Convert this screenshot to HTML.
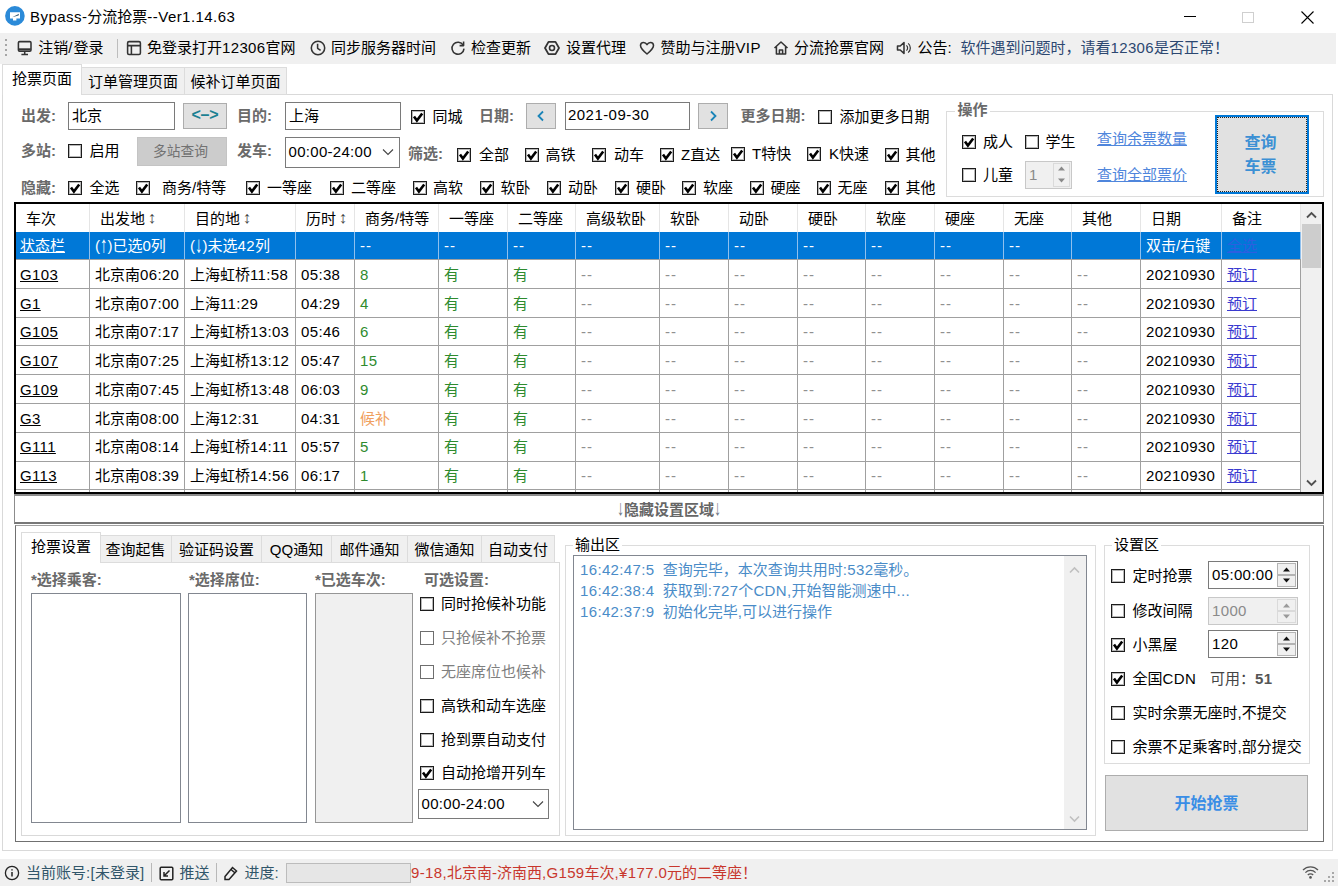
<!DOCTYPE html><html lang="zh"><head><meta charset="utf-8"><title>Bypass-分流抢票--Ver1.14.63</title><style>
html,body{margin:0;padding:0;}
body{width:1338px;height:886px;position:relative;overflow:hidden;background:#fff;font-family:"Liberation Sans","Noto Sans CJK SC",sans-serif;font-size:15px;color:#000;}
.a{position:absolute;white-space:nowrap;line-height:20px;height:20px;}
.g{color:#6a6a6a;font-weight:bold;}
.box{position:absolute;box-sizing:border-box;}
.cb{position:absolute;box-sizing:border-box;width:14px;height:14px;border:1px solid #1c1c1c;background:#fff;box-shadow:inset 0 0 0 1px rgba(0,0,0,.28);}
.cb.d{border-color:#6e6e6e;box-shadow:none;}
.cb svg{position:absolute;left:0;top:0;}
.inp{position:absolute;box-sizing:border-box;border:1px solid #7a7a7a;background:#fff;}
.btn{position:absolute;box-sizing:border-box;border:1px solid #adadad;background:#e1e1e1;}
.tab{position:absolute;box-sizing:border-box;border:1px solid #dcdcdc;background:#f0f0f0;text-align:center;white-space:nowrap;}
.tab.s{background:#fff;border-bottom:none;}
.lnk{color:#4f86dc;text-decoration:underline;}
.th{position:absolute;top:0;height:28px;line-height:28px;white-space:nowrap;}
.td{position:absolute;white-space:nowrap;height:28px;line-height:28px;}
.vl{position:absolute;width:1px;}
.hl{position:absolute;height:1px;}
.grn{color:#2a8a2a;}
.dd{color:#8a8a8a;}
.dis{color:#808080;}
.l{letter-spacing:0.35px;}
</style></head><body>
<svg class="box" style="left:4px;top:5px" width="22" height="22" viewBox="0 0 22 22"><circle cx="10.9" cy="10.9" r="9.8" fill="#2b8ad8"/><path d="M6 7.3 H16 V13.4 H6 Z M9 13.4 H12.4 V15.6 H9 Z" fill="#fff"/><path d="M8.2 12.2 L15 8.8 L14.6 10.6 Z" fill="#3a5f7a"/></svg>
<div class="a " style="left:30px;top:6.5px;font-size:15px;"><span style="letter-spacing:0.45px">Bypass-</span>分流抢票<span style="letter-spacing:0.45px">--Ver1.14.63</span></div>
<div class="hl" style="left:1184px;top:16px;width:12px;background:#000"></div>
<div class="box" style="left:1242px;top:12px;width:12px;height:11px;border:1px solid #cfcfcf"></div>
<svg class="box" style="left:1300px;top:10px" width="15" height="15" viewBox="0 0 15 15"><path d="M1.5 1.5 L13.5 13.5 M13.5 1.5 L1.5 13.5" stroke="#000" stroke-width="1.1" fill="none"/></svg>
<div class="box" style="left:0;top:33px;width:1336px;height:31px;background:#f0f0f0"></div>
<div class="box" style="left:5px;top:39px;width:2px;height:2px;background:#a6a6a6"></div>
<div class="box" style="left:5px;top:44px;width:2px;height:2px;background:#a6a6a6"></div>
<div class="box" style="left:5px;top:49px;width:2px;height:2px;background:#a6a6a6"></div>
<div class="box" style="left:5px;top:54px;width:2px;height:2px;background:#a6a6a6"></div>
<svg class="box" style="left:17px;top:39.5px" width="16" height="16" viewBox="0 0 16 16" fill="none" stroke="#333" stroke-width="1.55" stroke-linejoin="round"><rect x="1.4" y="1.6" width="12.6" height="9.6" rx="1.2"/><path d="M1.6 9.4 H13.8" stroke-width="2.2"/><path d="M4.4 14.4 H11 M7.7 11.4 V14"/></svg>
<div class="a " style="left:38.3px;top:37.5px;">注销<span style="letter-spacing:1px">/</span>登录</div>
<div class="vl" style="left:117px;top:39px;height:19px;background:#bdbdbd"></div>
<svg class="box" style="left:125.5px;top:39.5px" width="16" height="16" viewBox="0 0 16 16" fill="none" stroke="#333" stroke-width="1.55" stroke-linejoin="round"><rect x="1.6" y="1.6" width="12.8" height="12.8" rx="1.4"/><path d="M1.6 5.6 H14.4 M5.4 5.6 V14.4"/></svg>
<div class="a " style="left:147px;top:37.5px;">免登录打开<span class="l">12306</span>官网</div>
<svg class="box" style="left:309.5px;top:39.5px" width="16" height="16" viewBox="0 0 16 16" fill="none" stroke="#333" stroke-width="1.55" stroke-linejoin="round"><circle cx="8" cy="8" r="6.7"/><path d="M7.6 3.8 V8.3 L10.6 10.4"/></svg>
<div class="a " style="left:331px;top:37.5px;">同步服务器时间</div>
<svg class="box" style="left:449.5px;top:39.5px" width="16" height="16" viewBox="0 0 16 16" fill="none" stroke="#333" stroke-width="1.55" stroke-linejoin="round"><path d="M13.2 5.2 A6 6 0 1 0 14 8.6"/><path d="M13.6 1.6 V5.6 H9.6" /></svg>
<div class="a " style="left:471px;top:37.5px;">检查更新</div>
<svg class="box" style="left:544px;top:39.5px" width="16" height="16" viewBox="0 0 16 16" fill="none" stroke="#333" stroke-width="1.55" stroke-linejoin="round"><path d="M15.0 8.0 L11.5 14.1 L4.5 14.1 L1.0 8.0 L4.5 1.9 L11.5 1.9 Z" stroke-width="1.8"/><circle cx="8" cy="8" r="2.5" stroke-width="1.6"/></svg>
<div class="a " style="left:566px;top:37.5px;">设置代理</div>
<svg class="box" style="left:639px;top:39.5px" width="16" height="16" viewBox="0 0 16 16" fill="none" stroke="#333" stroke-width="1.55" stroke-linejoin="round"><path d="M8 14 C3 10 1.5 8 1.5 5.6 C1.5 3.6 3 2.4 4.6 2.4 C6 2.4 7.2 3.2 8 4.6 C8.8 3.2 10 2.4 11.4 2.4 C13 2.4 14.5 3.6 14.5 5.6 C14.5 8 13 10 8 14 Z"/></svg>
<div class="a " style="left:660.5px;top:37.5px;">赞助与注册<span class="l">VIP</span></div>
<svg class="box" style="left:772.5px;top:39.5px" width="16" height="16" viewBox="0 0 16 16" fill="none" stroke="#333" stroke-width="1.55" stroke-linejoin="round"><path d="M1.5 8 L8 2 L14.5 8 M3.4 6.6 V14 H12.6 V6.6 M6.4 14 V10 H9.6 V14"/></svg>
<div class="a " style="left:794px;top:37.5px;">分流抢票官网</div>
<svg class="box" style="left:896px;top:39.5px" width="16" height="16" viewBox="0 0 16 16" fill="none" stroke="#333" stroke-width="1.55" stroke-linejoin="round"><path d="M1.5 6 H4.2 L8 2.6 V13.4 L4.2 10 H1.5 Z"/><path d="M10.4 5.4 A3.4 3.4 0 0 1 10.4 10.6 M12.2 3.4 A6 6 0 0 1 12.2 12.6" stroke-width="1.2"/></svg>
<div class="a " style="left:917.5px;top:37.5px;">公告:</div>
<div class="a " style="left:960.5px;top:37.5px;color:#2c4770;">软件遇到问题时，请看<span class="l">12306</span>是否正常！</div>
<div class="box" style="left:2px;top:94px;width:1331px;height:757px;border:1px solid #d9d9d9"></div>
<div class="tab" style="left:81px;top:67px;width:104px;height:28px;line-height:28px">订单管理页面</div>
<div class="tab" style="left:184px;top:67px;width:103px;height:28px;line-height:28px">候补订单页面</div>
<div class="tab s" style="left:2px;top:64px;width:80px;height:31px;line-height:28px">抢票页面</div>
<div class="a g" style="left:21px;top:106px;">出发:</div>
<div class="inp" style="left:68px;top:102px;width:107px;height:28px"></div>
<div class="a " style="left:72px;top:106px;">北京</div>
<div class="btn" style="left:183px;top:103px;width:44px;height:26px"></div>
<div class="a " style="left:191.5px;top:105px;color:#1b8092;font-size:16px;font-weight:bold;letter-spacing:-0.3px">&lt;–&gt;</div>
<div class="a g" style="left:237px;top:106px;">目的:</div>
<div class="inp" style="left:285px;top:102px;width:116px;height:28px"></div>
<div class="a " style="left:289px;top:106px;">上海</div>
<div class="cb" style="left:410.5px;top:109.5px"><svg width="12" height="12" viewBox="0 0 12 12"><path d="M2 5.4 L4.9 9.6 L10.2 2.4" fill="none" stroke="#000" stroke-width="2.6"/></svg></div>
<div class="a " style="left:432.5px;top:106.5px;">同城</div>
<div class="a g" style="left:479px;top:106px;">日期:</div>
<div class="btn" style="left:526px;top:103px;width:30px;height:26px"></div>
<svg class="box" style="left:536px;top:110px" width="10" height="12" viewBox="0 0 10 12"><path d="M7 1.5 L2.5 6 L7 10.5" fill="none" stroke="#1a84b8" stroke-width="1.8"/></svg>
<div class="inp" style="left:564.5px;top:102px;width:125px;height:28px"></div>
<div class="a " style="left:568px;top:105px;letter-spacing:0.45px">2021-09-30</div>
<div class="btn" style="left:698px;top:103px;width:30px;height:26px"></div>
<svg class="box" style="left:708px;top:110px" width="10" height="12" viewBox="0 0 10 12"><path d="M3 1.5 L7.5 6 L3 10.5" fill="none" stroke="#1a84b8" stroke-width="1.8"/></svg>
<div class="a g" style="left:740.5px;top:106px;">更多日期:</div>
<div class="cb" style="left:817.5px;top:109.5px"></div>
<div class="a " style="left:839.5px;top:106.5px;">添加更多日期</div>
<div class="a g" style="left:21px;top:141px;">多站:</div>
<div class="cb" style="left:68px;top:144px"></div>
<div class="a " style="left:89.5px;top:141px;">启用</div>
<div class="box" style="left:137px;top:137px;width:90px;height:29px;background:#cccccc;border:1px solid #c4c4c4"></div>
<div class="a " style="left:153px;top:141.5px;color:#727272;font-size:13.75px">多站查询</div>
<div class="a g" style="left:237px;top:141px;">发车:</div>
<div class="inp" style="left:285px;top:137px;width:115px;height:30.5px"></div>
<div class="a " style="left:288.5px;top:141.5px;letter-spacing:0.3px">00:00-24:00</div>
<svg class="box" style="left:382px;top:148px" width="12" height="8" viewBox="0 0 12 8"><path d="M1 1.5 L6 6.5 L11 1.5" fill="none" stroke="#444" stroke-width="1.1"/></svg>
<div class="a g" style="left:408px;top:144px;">筛选:</div>
<div class="cb" style="left:457px;top:148px"><svg width="12" height="12" viewBox="0 0 12 12"><path d="M2 5.4 L4.9 9.6 L10.2 2.4" fill="none" stroke="#000" stroke-width="2.6"/></svg></div>
<div class="a " style="left:479px;top:145px;">全部</div>
<div class="cb" style="left:524.5px;top:148px"><svg width="12" height="12" viewBox="0 0 12 12"><path d="M2 5.4 L4.9 9.6 L10.2 2.4" fill="none" stroke="#000" stroke-width="2.6"/></svg></div>
<div class="a " style="left:545.5px;top:145px;">高铁</div>
<div class="cb" style="left:592px;top:148px"><svg width="12" height="12" viewBox="0 0 12 12"><path d="M2 5.4 L4.9 9.6 L10.2 2.4" fill="none" stroke="#000" stroke-width="2.6"/></svg></div>
<div class="a " style="left:614px;top:145px;">动车</div>
<div class="cb" style="left:659.5px;top:148px"><svg width="12" height="12" viewBox="0 0 12 12"><path d="M2 5.4 L4.9 9.6 L10.2 2.4" fill="none" stroke="#000" stroke-width="2.6"/></svg></div>
<div class="a " style="left:681px;top:145px;">Z直达</div>
<div class="cb" style="left:731px;top:147px"><svg width="12" height="12" viewBox="0 0 12 12"><path d="M2 5.4 L4.9 9.6 L10.2 2.4" fill="none" stroke="#000" stroke-width="2.6"/></svg></div>
<div class="a " style="left:752px;top:144px;">T特快</div>
<div class="cb" style="left:807px;top:147px"><svg width="12" height="12" viewBox="0 0 12 12"><path d="M2 5.4 L4.9 9.6 L10.2 2.4" fill="none" stroke="#000" stroke-width="2.6"/></svg></div>
<div class="a " style="left:829px;top:144px;">K快速</div>
<div class="cb" style="left:884.5px;top:147.5px"><svg width="12" height="12" viewBox="0 0 12 12"><path d="M2 5.4 L4.9 9.6 L10.2 2.4" fill="none" stroke="#000" stroke-width="2.6"/></svg></div>
<div class="a " style="left:905.5px;top:144.5px;">其他</div>
<div class="a g" style="left:21px;top:177.5px;">隐藏:</div>
<div class="cb" style="left:68px;top:180.5px"><svg width="12" height="12" viewBox="0 0 12 12"><path d="M2 5.4 L4.9 9.6 L10.2 2.4" fill="none" stroke="#000" stroke-width="2.6"/></svg></div>
<div class="a " style="left:89.5px;top:177.5px;">全选</div>
<div class="cb" style="left:136px;top:180.5px"><svg width="12" height="12" viewBox="0 0 12 12"><path d="M2 5.4 L4.9 9.6 L10.2 2.4" fill="none" stroke="#000" stroke-width="2.6"/></svg></div>
<div class="a " style="left:162px;top:177.5px;">商务/特等</div>
<div class="cb" style="left:245.5px;top:180.5px"><svg width="12" height="12" viewBox="0 0 12 12"><path d="M2 5.4 L4.9 9.6 L10.2 2.4" fill="none" stroke="#000" stroke-width="2.6"/></svg></div>
<div class="a " style="left:267px;top:177.5px;">一等座</div>
<div class="cb" style="left:329.5px;top:180.5px"><svg width="12" height="12" viewBox="0 0 12 12"><path d="M2 5.4 L4.9 9.6 L10.2 2.4" fill="none" stroke="#000" stroke-width="2.6"/></svg></div>
<div class="a " style="left:351px;top:177.5px;">二等座</div>
<div class="cb" style="left:412.5px;top:180.5px"><svg width="12" height="12" viewBox="0 0 12 12"><path d="M2 5.4 L4.9 9.6 L10.2 2.4" fill="none" stroke="#000" stroke-width="2.6"/></svg></div>
<div class="a " style="left:433px;top:177.5px;">高软</div>
<div class="cb" style="left:479.5px;top:180.5px"><svg width="12" height="12" viewBox="0 0 12 12"><path d="M2 5.4 L4.9 9.6 L10.2 2.4" fill="none" stroke="#000" stroke-width="2.6"/></svg></div>
<div class="a " style="left:500.5px;top:177.5px;">软卧</div>
<div class="cb" style="left:547px;top:180.5px"><svg width="12" height="12" viewBox="0 0 12 12"><path d="M2 5.4 L4.9 9.6 L10.2 2.4" fill="none" stroke="#000" stroke-width="2.6"/></svg></div>
<div class="a " style="left:568px;top:177.5px;">动卧</div>
<div class="cb" style="left:614.5px;top:180.5px"><svg width="12" height="12" viewBox="0 0 12 12"><path d="M2 5.4 L4.9 9.6 L10.2 2.4" fill="none" stroke="#000" stroke-width="2.6"/></svg></div>
<div class="a " style="left:636px;top:177.5px;">硬卧</div>
<div class="cb" style="left:682px;top:180.5px"><svg width="12" height="12" viewBox="0 0 12 12"><path d="M2 5.4 L4.9 9.6 L10.2 2.4" fill="none" stroke="#000" stroke-width="2.6"/></svg></div>
<div class="a " style="left:703px;top:177.5px;">软座</div>
<div class="cb" style="left:749.5px;top:180.5px"><svg width="12" height="12" viewBox="0 0 12 12"><path d="M2 5.4 L4.9 9.6 L10.2 2.4" fill="none" stroke="#000" stroke-width="2.6"/></svg></div>
<div class="a " style="left:770.5px;top:177.5px;">硬座</div>
<div class="cb" style="left:817px;top:180.5px"><svg width="12" height="12" viewBox="0 0 12 12"><path d="M2 5.4 L4.9 9.6 L10.2 2.4" fill="none" stroke="#000" stroke-width="2.6"/></svg></div>
<div class="a " style="left:837.5px;top:177.5px;">无座</div>
<div class="cb" style="left:884.5px;top:180.5px"><svg width="12" height="12" viewBox="0 0 12 12"><path d="M2 5.4 L4.9 9.6 L10.2 2.4" fill="none" stroke="#000" stroke-width="2.6"/></svg></div>
<div class="a " style="left:905.5px;top:177.5px;">其他</div>
<div class="box" style="left:946px;top:111px;width:378px;height:86px;border:1px solid #dcdcdc"></div>
<div class="a g" style="left:955px;top:100px;background:#fff;padding:0 2.5px">操作</div>
<div class="cb" style="left:962px;top:134.5px"><svg width="12" height="12" viewBox="0 0 12 12"><path d="M2 5.4 L4.9 9.6 L10.2 2.4" fill="none" stroke="#000" stroke-width="2.6"/></svg></div>
<div class="a " style="left:983px;top:131.5px;">成人</div>
<div class="cb" style="left:1024.5px;top:134.5px"></div>
<div class="a " style="left:1045.5px;top:131.5px;">学生</div>
<div class="cb" style="left:962px;top:167.5px"></div>
<div class="a " style="left:983px;top:164.5px;">儿童</div>
<div class="box" style="left:1024.5px;top:160.5px;width:47px;height:28px;background:#f0f0f0;border:1px solid #c8c8c8"></div>
<div class="a " style="left:1029px;top:164.5px;color:#8a8a8a">1</div>
<div class="box" style="left:1053px;top:162.5px;width:17px;height:24px;background:#f0f0f0;border:1px solid #dadada"></div>
<svg class="box" style="left:1057px;top:165px" width="9" height="19" viewBox="0 0 9 19"><path d="M1 5.5 L4.5 1.5 L8 5.5 Z M1 13.5 L4.5 17.5 L8 13.5 Z" fill="#8a8a8a"/></svg>
<div class="a lnk" style="left:1097px;top:128.5px;">查询余票数量</div>
<div class="a lnk" style="left:1097px;top:165px;">查询全部票价</div>
<div class="box" style="left:1215px;top:115px;width:94px;height:79px;background:#e1e1e1;border:2px solid #0078d7"></div>
<div class="box" style="left:1217px;top:117px;width:90px;height:75px;border:1px dotted #222"></div>
<div class="a " style="left:1244.5px;top:133px;color:#3c90d4;font-weight:bold;font-size:16px">查询</div>
<div class="a " style="left:1244.5px;top:157px;color:#3c90d4;font-weight:bold;font-size:16px">车票</div>
<div class="box" style="left:14px;top:202px;width:1310px;height:292px;border:2px solid #000;background:#fff;overflow:hidden" id="tbl">
<div class="box" style="left:0;top:28px;width:1285px;height:28px;background:#0078d7"></div>
<div class="vl" style="left:73px;top:0;height:28px;background:#e5e5e5"></div>
<div class="vl" style="left:73px;top:28px;height:262px;background:#a0a0a0"></div>
<div class="vl" style="left:73px;top:28px;height:27px;background:#8fc0ee"></div>
<div class="vl" style="left:168px;top:0;height:28px;background:#e5e5e5"></div>
<div class="vl" style="left:168px;top:28px;height:262px;background:#a0a0a0"></div>
<div class="vl" style="left:168px;top:28px;height:27px;background:#8fc0ee"></div>
<div class="vl" style="left:279px;top:0;height:28px;background:#e5e5e5"></div>
<div class="vl" style="left:279px;top:28px;height:262px;background:#a0a0a0"></div>
<div class="vl" style="left:279px;top:28px;height:27px;background:#8fc0ee"></div>
<div class="vl" style="left:338px;top:0;height:28px;background:#e5e5e5"></div>
<div class="vl" style="left:338px;top:28px;height:262px;background:#a0a0a0"></div>
<div class="vl" style="left:338px;top:28px;height:27px;background:#8fc0ee"></div>
<div class="vl" style="left:422px;top:0;height:28px;background:#e5e5e5"></div>
<div class="vl" style="left:422px;top:28px;height:262px;background:#a0a0a0"></div>
<div class="vl" style="left:422px;top:28px;height:27px;background:#8fc0ee"></div>
<div class="vl" style="left:491px;top:0;height:28px;background:#e5e5e5"></div>
<div class="vl" style="left:491px;top:28px;height:262px;background:#a0a0a0"></div>
<div class="vl" style="left:491px;top:28px;height:27px;background:#8fc0ee"></div>
<div class="vl" style="left:559px;top:0;height:28px;background:#e5e5e5"></div>
<div class="vl" style="left:559px;top:28px;height:262px;background:#a0a0a0"></div>
<div class="vl" style="left:559px;top:28px;height:27px;background:#8fc0ee"></div>
<div class="vl" style="left:643px;top:0;height:28px;background:#e5e5e5"></div>
<div class="vl" style="left:643px;top:28px;height:262px;background:#a0a0a0"></div>
<div class="vl" style="left:643px;top:28px;height:27px;background:#8fc0ee"></div>
<div class="vl" style="left:712px;top:0;height:28px;background:#e5e5e5"></div>
<div class="vl" style="left:712px;top:28px;height:262px;background:#a0a0a0"></div>
<div class="vl" style="left:712px;top:28px;height:27px;background:#8fc0ee"></div>
<div class="vl" style="left:781px;top:0;height:28px;background:#e5e5e5"></div>
<div class="vl" style="left:781px;top:28px;height:262px;background:#a0a0a0"></div>
<div class="vl" style="left:781px;top:28px;height:27px;background:#8fc0ee"></div>
<div class="vl" style="left:849px;top:0;height:28px;background:#e5e5e5"></div>
<div class="vl" style="left:849px;top:28px;height:262px;background:#a0a0a0"></div>
<div class="vl" style="left:849px;top:28px;height:27px;background:#8fc0ee"></div>
<div class="vl" style="left:918px;top:0;height:28px;background:#e5e5e5"></div>
<div class="vl" style="left:918px;top:28px;height:262px;background:#a0a0a0"></div>
<div class="vl" style="left:918px;top:28px;height:27px;background:#8fc0ee"></div>
<div class="vl" style="left:987px;top:0;height:28px;background:#e5e5e5"></div>
<div class="vl" style="left:987px;top:28px;height:262px;background:#a0a0a0"></div>
<div class="vl" style="left:987px;top:28px;height:27px;background:#8fc0ee"></div>
<div class="vl" style="left:1055px;top:0;height:28px;background:#e5e5e5"></div>
<div class="vl" style="left:1055px;top:28px;height:262px;background:#a0a0a0"></div>
<div class="vl" style="left:1055px;top:28px;height:27px;background:#8fc0ee"></div>
<div class="vl" style="left:1124px;top:0;height:28px;background:#e5e5e5"></div>
<div class="vl" style="left:1124px;top:28px;height:262px;background:#a0a0a0"></div>
<div class="vl" style="left:1124px;top:28px;height:27px;background:#8fc0ee"></div>
<div class="vl" style="left:1205px;top:0;height:28px;background:#e5e5e5"></div>
<div class="vl" style="left:1205px;top:28px;height:262px;background:#a0a0a0"></div>
<div class="vl" style="left:1205px;top:28px;height:27px;background:#8fc0ee"></div>
<div class="vl" style="left:1284px;top:0;height:28px;background:#e5e5e5"></div>
<div class="vl" style="left:1284px;top:28px;height:262px;background:#a0a0a0"></div>
<div class="vl" style="left:1284px;top:28px;height:27px;background:#8fc0ee"></div>
<div class="hl" style="left:0;top:55px;width:1285px;background:#a0a0a0"></div>
<div class="hl" style="left:0;top:84px;width:1285px;background:#a0a0a0"></div>
<div class="hl" style="left:0;top:113px;width:1285px;background:#a0a0a0"></div>
<div class="hl" style="left:0;top:141px;width:1285px;background:#a0a0a0"></div>
<div class="hl" style="left:0;top:170px;width:1285px;background:#a0a0a0"></div>
<div class="hl" style="left:0;top:199px;width:1285px;background:#a0a0a0"></div>
<div class="hl" style="left:0;top:228px;width:1285px;background:#a0a0a0"></div>
<div class="hl" style="left:0;top:257px;width:1285px;background:#a0a0a0"></div>
<div class="hl" style="left:0;top:285px;width:1285px;background:#a0a0a0"></div>
<div class="hl" style="left:0;top:314px;width:1285px;background:#a0a0a0"></div>
<div class="th" style="left:10px;top:0.5px">车次</div>
<div class="th" style="left:84px;top:0.5px">出发地<span style="font-size:15px;color:#444;margin-left:3px;display:inline-block;transform:translateY(-1.8px) scale(1.15,1.1);font-weight:bold">↕</span></div>
<div class="th" style="left:179px;top:0.5px">目的地<span style="font-size:15px;color:#444;margin-left:3px;display:inline-block;transform:translateY(-1.8px) scale(1.15,1.1);font-weight:bold">↕</span></div>
<div class="th" style="left:290px;top:0.5px">历时<span style="font-size:15px;color:#444;margin-left:3px;display:inline-block;transform:translateY(-1.8px) scale(1.15,1.1);font-weight:bold">↕</span></div>
<div class="th" style="left:349px;top:0.5px">商务/特等</div>
<div class="th" style="left:433px;top:0.5px">一等座</div>
<div class="th" style="left:502px;top:0.5px">二等座</div>
<div class="th" style="left:570px;top:0.5px">高级软卧</div>
<div class="th" style="left:654px;top:0.5px">软卧</div>
<div class="th" style="left:723px;top:0.5px">动卧</div>
<div class="th" style="left:792px;top:0.5px">硬卧</div>
<div class="th" style="left:860px;top:0.5px">软座</div>
<div class="th" style="left:929px;top:0.5px">硬座</div>
<div class="th" style="left:998px;top:0.5px">无座</div>
<div class="th" style="left:1066px;top:0.5px">其他</div>
<div class="th" style="left:1135px;top:0.5px">日期</div>
<div class="th" style="left:1216px;top:0.5px">备注</div>
<div class="td" style="left:4px;top:28px;color:#fff;text-decoration:underline;">状态栏</div>
<div class="td" style="left:79px;top:28px;color:#fff;">(<span style="display:inline-block;transform:translateY(-1.2px) scaleY(1.5)">↑</span>)已选0列</div>
<div class="td" style="left:174px;top:28px;color:#fff;">(<span style="display:inline-block;transform:translateY(-1.2px) scaleY(1.5)">↓</span>)未选<span class="l">42</span>列</div>
<div class="td" style="left:344px;top:28px;color:#fff;letter-spacing:1px;">--</div>
<div class="td" style="left:428px;top:28px;color:#fff;letter-spacing:1px;">--</div>
<div class="td" style="left:497px;top:28px;color:#fff;letter-spacing:1px;">--</div>
<div class="td" style="left:565px;top:28px;color:#fff;letter-spacing:1px;">--</div>
<div class="td" style="left:649px;top:28px;color:#fff;letter-spacing:1px;">--</div>
<div class="td" style="left:718px;top:28px;color:#fff;letter-spacing:1px;">--</div>
<div class="td" style="left:787px;top:28px;color:#fff;letter-spacing:1px;">--</div>
<div class="td" style="left:855px;top:28px;color:#fff;letter-spacing:1px;">--</div>
<div class="td" style="left:924px;top:28px;color:#fff;letter-spacing:1px;">--</div>
<div class="td" style="left:993px;top:28px;color:#fff;letter-spacing:1px;">--</div>
<div class="td" style="left:1130px;top:28px;color:#fff;">双击/右键</div>
<div class="td" style="left:1211px;top:28px;color:#2c5fe0;text-decoration:underline;">全选</div>
<div class="td" style="left:4px;top:56.75px;text-decoration:underline;"><span class="l">G103</span></div>
<div class="td" style="left:79px;top:56.75px;">北京南<span class="l">06:20</span></div>
<div class="td" style="left:174px;top:56.75px;">上海虹桥<span class="l">11:58</span></div>
<div class="td" style="left:285px;top:56.75px;"><span class="l">05:38</span></div>
<div class="td" style="left:344px;top:56.75px;color:#2e8b2e;">8</div>
<div class="td" style="left:428px;top:56.75px;color:#2e8b2e;">有</div>
<div class="td" style="left:497px;top:56.75px;color:#2e8b2e;">有</div>
<div class="td" style="left:565px;top:56.75px;color:#909090;letter-spacing:1px;">--</div>
<div class="td" style="left:649px;top:56.75px;color:#909090;letter-spacing:1px;">--</div>
<div class="td" style="left:718px;top:56.75px;color:#909090;letter-spacing:1px;">--</div>
<div class="td" style="left:787px;top:56.75px;color:#909090;letter-spacing:1px;">--</div>
<div class="td" style="left:855px;top:56.75px;color:#909090;letter-spacing:1px;">--</div>
<div class="td" style="left:924px;top:56.75px;color:#909090;letter-spacing:1px;">--</div>
<div class="td" style="left:993px;top:56.75px;color:#909090;letter-spacing:1px;">--</div>
<div class="td" style="left:1061px;top:56.75px;color:#909090;letter-spacing:1px;">--</div>
<div class="td" style="left:1130px;top:56.75px;letter-spacing:0.3px;">20210930</div>
<div class="td" style="left:1211px;top:56.75px;color:#3a3ad0;text-decoration:underline;">预订</div>
<div class="td" style="left:4px;top:85.5px;text-decoration:underline;"><span class="l">G1</span></div>
<div class="td" style="left:79px;top:85.5px;">北京南<span class="l">07:00</span></div>
<div class="td" style="left:174px;top:85.5px;">上海<span class="l">11:29</span></div>
<div class="td" style="left:285px;top:85.5px;"><span class="l">04:29</span></div>
<div class="td" style="left:344px;top:85.5px;color:#2e8b2e;">4</div>
<div class="td" style="left:428px;top:85.5px;color:#2e8b2e;">有</div>
<div class="td" style="left:497px;top:85.5px;color:#2e8b2e;">有</div>
<div class="td" style="left:565px;top:85.5px;color:#909090;letter-spacing:1px;">--</div>
<div class="td" style="left:649px;top:85.5px;color:#909090;letter-spacing:1px;">--</div>
<div class="td" style="left:718px;top:85.5px;color:#909090;letter-spacing:1px;">--</div>
<div class="td" style="left:787px;top:85.5px;color:#909090;letter-spacing:1px;">--</div>
<div class="td" style="left:855px;top:85.5px;color:#909090;letter-spacing:1px;">--</div>
<div class="td" style="left:924px;top:85.5px;color:#909090;letter-spacing:1px;">--</div>
<div class="td" style="left:993px;top:85.5px;color:#909090;letter-spacing:1px;">--</div>
<div class="td" style="left:1061px;top:85.5px;color:#909090;letter-spacing:1px;">--</div>
<div class="td" style="left:1130px;top:85.5px;letter-spacing:0.3px;">20210930</div>
<div class="td" style="left:1211px;top:85.5px;color:#3a3ad0;text-decoration:underline;">预订</div>
<div class="td" style="left:4px;top:114.25px;text-decoration:underline;"><span class="l">G105</span></div>
<div class="td" style="left:79px;top:114.25px;">北京南<span class="l">07:17</span></div>
<div class="td" style="left:174px;top:114.25px;">上海虹桥<span class="l">13:03</span></div>
<div class="td" style="left:285px;top:114.25px;"><span class="l">05:46</span></div>
<div class="td" style="left:344px;top:114.25px;color:#2e8b2e;">6</div>
<div class="td" style="left:428px;top:114.25px;color:#2e8b2e;">有</div>
<div class="td" style="left:497px;top:114.25px;color:#2e8b2e;">有</div>
<div class="td" style="left:565px;top:114.25px;color:#909090;letter-spacing:1px;">--</div>
<div class="td" style="left:649px;top:114.25px;color:#909090;letter-spacing:1px;">--</div>
<div class="td" style="left:718px;top:114.25px;color:#909090;letter-spacing:1px;">--</div>
<div class="td" style="left:787px;top:114.25px;color:#909090;letter-spacing:1px;">--</div>
<div class="td" style="left:855px;top:114.25px;color:#909090;letter-spacing:1px;">--</div>
<div class="td" style="left:924px;top:114.25px;color:#909090;letter-spacing:1px;">--</div>
<div class="td" style="left:993px;top:114.25px;color:#909090;letter-spacing:1px;">--</div>
<div class="td" style="left:1061px;top:114.25px;color:#909090;letter-spacing:1px;">--</div>
<div class="td" style="left:1130px;top:114.25px;letter-spacing:0.3px;">20210930</div>
<div class="td" style="left:1211px;top:114.25px;color:#3a3ad0;text-decoration:underline;">预订</div>
<div class="td" style="left:4px;top:143px;text-decoration:underline;"><span class="l">G107</span></div>
<div class="td" style="left:79px;top:143px;">北京南<span class="l">07:25</span></div>
<div class="td" style="left:174px;top:143px;">上海虹桥<span class="l">13:12</span></div>
<div class="td" style="left:285px;top:143px;"><span class="l">05:47</span></div>
<div class="td" style="left:344px;top:143px;color:#2e8b2e;"><span class="l">15</span></div>
<div class="td" style="left:428px;top:143px;color:#2e8b2e;">有</div>
<div class="td" style="left:497px;top:143px;color:#2e8b2e;">有</div>
<div class="td" style="left:565px;top:143px;color:#909090;letter-spacing:1px;">--</div>
<div class="td" style="left:649px;top:143px;color:#909090;letter-spacing:1px;">--</div>
<div class="td" style="left:718px;top:143px;color:#909090;letter-spacing:1px;">--</div>
<div class="td" style="left:787px;top:143px;color:#909090;letter-spacing:1px;">--</div>
<div class="td" style="left:855px;top:143px;color:#909090;letter-spacing:1px;">--</div>
<div class="td" style="left:924px;top:143px;color:#909090;letter-spacing:1px;">--</div>
<div class="td" style="left:993px;top:143px;color:#909090;letter-spacing:1px;">--</div>
<div class="td" style="left:1061px;top:143px;color:#909090;letter-spacing:1px;">--</div>
<div class="td" style="left:1130px;top:143px;letter-spacing:0.3px;">20210930</div>
<div class="td" style="left:1211px;top:143px;color:#3a3ad0;text-decoration:underline;">预订</div>
<div class="td" style="left:4px;top:171.75px;text-decoration:underline;"><span class="l">G109</span></div>
<div class="td" style="left:79px;top:171.75px;">北京南<span class="l">07:45</span></div>
<div class="td" style="left:174px;top:171.75px;">上海虹桥<span class="l">13:48</span></div>
<div class="td" style="left:285px;top:171.75px;"><span class="l">06:03</span></div>
<div class="td" style="left:344px;top:171.75px;color:#2e8b2e;">9</div>
<div class="td" style="left:428px;top:171.75px;color:#2e8b2e;">有</div>
<div class="td" style="left:497px;top:171.75px;color:#2e8b2e;">有</div>
<div class="td" style="left:565px;top:171.75px;color:#909090;letter-spacing:1px;">--</div>
<div class="td" style="left:649px;top:171.75px;color:#909090;letter-spacing:1px;">--</div>
<div class="td" style="left:718px;top:171.75px;color:#909090;letter-spacing:1px;">--</div>
<div class="td" style="left:787px;top:171.75px;color:#909090;letter-spacing:1px;">--</div>
<div class="td" style="left:855px;top:171.75px;color:#909090;letter-spacing:1px;">--</div>
<div class="td" style="left:924px;top:171.75px;color:#909090;letter-spacing:1px;">--</div>
<div class="td" style="left:993px;top:171.75px;color:#909090;letter-spacing:1px;">--</div>
<div class="td" style="left:1061px;top:171.75px;color:#909090;letter-spacing:1px;">--</div>
<div class="td" style="left:1130px;top:171.75px;letter-spacing:0.3px;">20210930</div>
<div class="td" style="left:1211px;top:171.75px;color:#3a3ad0;text-decoration:underline;">预订</div>
<div class="td" style="left:4px;top:200.5px;text-decoration:underline;"><span class="l">G3</span></div>
<div class="td" style="left:79px;top:200.5px;">北京南<span class="l">08:00</span></div>
<div class="td" style="left:174px;top:200.5px;">上海<span class="l">12:31</span></div>
<div class="td" style="left:285px;top:200.5px;"><span class="l">04:31</span></div>
<div class="td" style="left:344px;top:200.5px;color:#f0a060;">候补</div>
<div class="td" style="left:428px;top:200.5px;color:#2e8b2e;">有</div>
<div class="td" style="left:497px;top:200.5px;color:#2e8b2e;">有</div>
<div class="td" style="left:565px;top:200.5px;color:#909090;letter-spacing:1px;">--</div>
<div class="td" style="left:649px;top:200.5px;color:#909090;letter-spacing:1px;">--</div>
<div class="td" style="left:718px;top:200.5px;color:#909090;letter-spacing:1px;">--</div>
<div class="td" style="left:787px;top:200.5px;color:#909090;letter-spacing:1px;">--</div>
<div class="td" style="left:855px;top:200.5px;color:#909090;letter-spacing:1px;">--</div>
<div class="td" style="left:924px;top:200.5px;color:#909090;letter-spacing:1px;">--</div>
<div class="td" style="left:993px;top:200.5px;color:#909090;letter-spacing:1px;">--</div>
<div class="td" style="left:1061px;top:200.5px;color:#909090;letter-spacing:1px;">--</div>
<div class="td" style="left:1130px;top:200.5px;letter-spacing:0.3px;">20210930</div>
<div class="td" style="left:1211px;top:200.5px;color:#3a3ad0;text-decoration:underline;">预订</div>
<div class="td" style="left:4px;top:229.25px;text-decoration:underline;"><span class="l">G111</span></div>
<div class="td" style="left:79px;top:229.25px;">北京南<span class="l">08:14</span></div>
<div class="td" style="left:174px;top:229.25px;">上海虹桥<span class="l">14:11</span></div>
<div class="td" style="left:285px;top:229.25px;"><span class="l">05:57</span></div>
<div class="td" style="left:344px;top:229.25px;color:#2e8b2e;">5</div>
<div class="td" style="left:428px;top:229.25px;color:#2e8b2e;">有</div>
<div class="td" style="left:497px;top:229.25px;color:#2e8b2e;">有</div>
<div class="td" style="left:565px;top:229.25px;color:#909090;letter-spacing:1px;">--</div>
<div class="td" style="left:649px;top:229.25px;color:#909090;letter-spacing:1px;">--</div>
<div class="td" style="left:718px;top:229.25px;color:#909090;letter-spacing:1px;">--</div>
<div class="td" style="left:787px;top:229.25px;color:#909090;letter-spacing:1px;">--</div>
<div class="td" style="left:855px;top:229.25px;color:#909090;letter-spacing:1px;">--</div>
<div class="td" style="left:924px;top:229.25px;color:#909090;letter-spacing:1px;">--</div>
<div class="td" style="left:993px;top:229.25px;color:#909090;letter-spacing:1px;">--</div>
<div class="td" style="left:1061px;top:229.25px;color:#909090;letter-spacing:1px;">--</div>
<div class="td" style="left:1130px;top:229.25px;letter-spacing:0.3px;">20210930</div>
<div class="td" style="left:1211px;top:229.25px;color:#3a3ad0;text-decoration:underline;">预订</div>
<div class="td" style="left:4px;top:258px;text-decoration:underline;"><span class="l">G113</span></div>
<div class="td" style="left:79px;top:258px;">北京南<span class="l">08:39</span></div>
<div class="td" style="left:174px;top:258px;">上海虹桥<span class="l">14:56</span></div>
<div class="td" style="left:285px;top:258px;"><span class="l">06:17</span></div>
<div class="td" style="left:344px;top:258px;color:#2e8b2e;">1</div>
<div class="td" style="left:428px;top:258px;color:#2e8b2e;">有</div>
<div class="td" style="left:497px;top:258px;color:#2e8b2e;">有</div>
<div class="td" style="left:565px;top:258px;color:#909090;letter-spacing:1px;">--</div>
<div class="td" style="left:649px;top:258px;color:#909090;letter-spacing:1px;">--</div>
<div class="td" style="left:718px;top:258px;color:#909090;letter-spacing:1px;">--</div>
<div class="td" style="left:787px;top:258px;color:#909090;letter-spacing:1px;">--</div>
<div class="td" style="left:855px;top:258px;color:#909090;letter-spacing:1px;">--</div>
<div class="td" style="left:924px;top:258px;color:#909090;letter-spacing:1px;">--</div>
<div class="td" style="left:993px;top:258px;color:#909090;letter-spacing:1px;">--</div>
<div class="td" style="left:1061px;top:258px;color:#909090;letter-spacing:1px;">--</div>
<div class="td" style="left:1130px;top:258px;letter-spacing:0.3px;">20210930</div>
<div class="td" style="left:1211px;top:258px;color:#3a3ad0;text-decoration:underline;">预订</div>
<div class="box" style="left:1285px;top:0;width:21px;height:288px;background:#f0f0f0"></div>
<div class="box" style="left:1286px;top:20px;width:19px;height:44px;background:#cdcdcd"></div>
<svg class="box" style="left:1290px;top:7px" width="11" height="8" viewBox="0 0 11 8"><path d="M1 6.5 L5.5 2 L10 6.5" fill="none" stroke="#505050" stroke-width="1.8"/></svg>
<svg class="box" style="left:1290px;top:275px" width="11" height="8" viewBox="0 0 11 8"><path d="M1 1.5 L5.5 6 L10 1.5" fill="none" stroke="#505050" stroke-width="1.8"/></svg>
</div>
<div class="box" style="left:14px;top:494px;width:1310px;height:30px;border:2px solid #8c8c8c;border-bottom-color:#787878;border-left-width:1px;border-right-width:1px;background:#fff"></div>
<div class="a" style="left:14px;width:1310px;text-align:center;top:499.5px;color:#666;font-weight:bold;font-size:15px"><span style="display:inline-block;transform:translateY(-2.6px) scaleY(1.55);font-size:14px;color:#6f7a86">↓</span>隐藏设置区域<span style="display:inline-block;transform:translateY(-2.6px) scaleY(1.55);font-size:14px;color:#6f7a86">↓</span></div>
<div class="box" style="left:15px;top:525px;width:1309px;height:317px;border:1px solid #707070;border-top-color:#a0a0a0;background:#fff"></div>
<div class="box" style="left:21px;top:562px;width:539px;height:274px;border:1px solid #d9d9d9"></div>
<div class="tab" style="left:99px;top:535px;width:73px;height:28px;line-height:28px">查询起售</div>
<div class="tab" style="left:171px;top:535px;width:91px;height:28px;line-height:28px">验证码设置</div>
<div class="tab" style="left:261px;top:535px;width:71px;height:28px;line-height:28px">QQ通知</div>
<div class="tab" style="left:331px;top:535px;width:77px;height:28px;line-height:28px">邮件通知</div>
<div class="tab" style="left:407px;top:535px;width:75px;height:28px;line-height:28px">微信通知</div>
<div class="tab" style="left:481px;top:535px;width:74px;height:28px;line-height:28px">自动支付</div>
<div class="tab s" style="left:21px;top:532px;width:80px;height:31px;line-height:28px">抢票设置</div>
<div class="a g" style="left:31px;top:570px;">*选择乘客:</div>
<div class="a g" style="left:189px;top:570px;">*选择席位:</div>
<div class="a g" style="left:315px;top:570px;">*已选车次:</div>
<div class="a g" style="left:424px;top:570px;">可选设置:</div>
<div class="inp" style="left:31px;top:593px;width:150px;height:230px;border-color:#828790"></div>
<div class="inp" style="left:188px;top:593px;width:119px;height:230px;border-color:#828790"></div>
<div class="inp" style="left:314.5px;top:593px;width:98px;height:230px;border-color:#969696;background:#f0f0f0"></div>
<div class="cb" style="left:419.5px;top:597px"></div>
<div class="a " style="left:441px;top:594px;">同时抢候补功能</div>
<div class="cb d" style="left:419.5px;top:631px"></div>
<div class="a dis" style="left:441px;top:628px;">只抢候补不抢票</div>
<div class="cb d" style="left:419.5px;top:665px"></div>
<div class="a dis" style="left:441px;top:662px;">无座席位也候补</div>
<div class="cb" style="left:419.5px;top:699px"></div>
<div class="a " style="left:441px;top:696px;">高铁和动车选座</div>
<div class="cb" style="left:419.5px;top:732.5px"></div>
<div class="a " style="left:441px;top:729.5px;">抢到票自动支付</div>
<div class="cb" style="left:419.5px;top:766px"><svg width="12" height="12" viewBox="0 0 12 12"><path d="M2 5.4 L4.9 9.6 L10.2 2.4" fill="none" stroke="#000" stroke-width="2.6"/></svg></div>
<div class="a " style="left:441px;top:763px;">自动抢增开列车</div>
<div class="inp" style="left:418px;top:789px;width:131px;height:30px"></div>
<div class="a " style="left:421.5px;top:793.5px;letter-spacing:0.3px">00:00-24:00</div>
<svg class="box" style="left:532px;top:800px" width="12" height="8" viewBox="0 0 12 8"><path d="M1 1.5 L6 6.5 L11 1.5" fill="none" stroke="#444" stroke-width="1.1"/></svg>
<div class="box" style="left:565px;top:545px;width:531px;height:291px;border:1px solid #dcdcdc"></div>
<div class="a" style="left:573px;top:535px;background:#fff;padding:0 2px">输出区</div>
<div class="inp" style="left:573px;top:555px;width:514px;height:275px;border-color:#828790"></div>
<div class="box" style="left:1064px;top:556px;width:22px;height:273px;background:#f0f0f0"></div>
<svg class="box" style="left:1069px;top:566px" width="11" height="8" viewBox="0 0 11 8"><path d="M1 6.5 L5.5 2 L10 6.5" fill="none" stroke="#c0c0c0" stroke-width="1.6"/></svg>
<svg class="box" style="left:1069px;top:815px" width="11" height="8" viewBox="0 0 11 8"><path d="M1 1.5 L5.5 6 L10 1.5" fill="none" stroke="#c0c0c0" stroke-width="1.6"/></svg>
<div class="a " style="left:580px;top:560px;color:#4a8cc8;font-size:15px"><span class="l">16:42:47:5</span>&nbsp; 查询完毕，本次查询共用时<span class="l">:532</span>毫秒。</div>
<div class="a " style="left:580px;top:581px;color:#4a8cc8;font-size:15px"><span class="l">16:42:38:4</span>&nbsp; 获取到<span class="l">:727</span>个<span class="l">CDN,</span>开始智能测速中<span class="l">...</span></div>
<div class="a " style="left:580px;top:602px;color:#4a8cc8;font-size:15px"><span class="l">16:42:37:9</span>&nbsp; 初始化完毕,可以进行操作</div>
<div class="box" style="left:1104px;top:545px;width:206px;height:219px;border:1px solid #dcdcdc"></div>
<div class="a" style="left:1112px;top:535px;background:#fff;padding:0 2px">设置区</div>
<div class="cb" style="left:1111px;top:568.5px"></div>
<div class="a " style="left:1132.5px;top:565.5px;">定时抢票</div>
<div class="cb" style="left:1111px;top:603.5px"></div>
<div class="a " style="left:1132.5px;top:600.5px;">修改间隔</div>
<div class="cb" style="left:1111px;top:638px"><svg width="12" height="12" viewBox="0 0 12 12"><path d="M2 5.4 L4.9 9.6 L10.2 2.4" fill="none" stroke="#000" stroke-width="2.6"/></svg></div>
<div class="a " style="left:1132.5px;top:635px;">小黑屋</div>
<div class="cb" style="left:1111px;top:672px"><svg width="12" height="12" viewBox="0 0 12 12"><path d="M2 5.4 L4.9 9.6 L10.2 2.4" fill="none" stroke="#000" stroke-width="2.6"/></svg></div>
<div class="a " style="left:1132.5px;top:669px;">全国<span class="l">CDN</span></div>
<div class="cb" style="left:1111px;top:706px"></div>
<div class="a " style="left:1132.5px;top:703px;">实时余票无座时,不提交</div>
<div class="cb" style="left:1111px;top:739.5px"></div>
<div class="a " style="left:1132.5px;top:736.5px;">余票不足乘客时,部分提交</div>
<div class="inp" style="left:1208px;top:561px;width:90px;height:28px;"></div>
<div class="a " style="left:1212px;top:564.5px;"><span class="l">05:00:00</span></div>
<div class="box" style="left:1277px;top:563px;width:19px;height:12px;background:#f0f0f0;border:1px solid #b4b4b4"></div>
<div class="box" style="left:1277px;top:575px;width:19px;height:12px;background:#f0f0f0;border:1px solid #b4b4b4"></div>
<svg class="box" style="left:1282px;top:565px" width="9" height="20" viewBox="0 0 9 20"><path d="M1 6.5 L4.5 2.5 L8 6.5 Z M1 13.5 L4.5 17.5 L8 13.5 Z" fill="#111"/></svg>
<div class="inp" style="left:1208px;top:597px;width:90px;height:28px;background:#f0f0f0;border-color:#c8c8c8"></div>
<div class="a " style="left:1212px;top:600.5px;color:#8a8a8a"><span class="l">1000</span></div>
<div class="box" style="left:1277px;top:599px;width:19px;height:12px;background:#f0f0f0;border:1px solid #dadada"></div>
<div class="box" style="left:1277px;top:611px;width:19px;height:12px;background:#f0f0f0;border:1px solid #dadada"></div>
<svg class="box" style="left:1282px;top:601px" width="9" height="20" viewBox="0 0 9 20"><path d="M1 6.5 L4.5 2.5 L8 6.5 Z M1 13.5 L4.5 17.5 L8 13.5 Z" fill="#9a9a9a"/></svg>
<div class="inp" style="left:1208px;top:630px;width:90px;height:28px;"></div>
<div class="a " style="left:1212px;top:633.5px;"><span class="l">120</span></div>
<div class="box" style="left:1277px;top:632px;width:19px;height:12px;background:#f0f0f0;border:1px solid #b4b4b4"></div>
<div class="box" style="left:1277px;top:644px;width:19px;height:12px;background:#f0f0f0;border:1px solid #b4b4b4"></div>
<svg class="box" style="left:1282px;top:634px" width="9" height="20" viewBox="0 0 9 20"><path d="M1 6.5 L4.5 2.5 L8 6.5 Z M1 13.5 L4.5 17.5 L8 13.5 Z" fill="#111"/></svg>
<div class="a " style="left:1210px;top:669px;color:#444">可用：</div>
<div class="a " style="left:1255px;top:669px;color:#555;font-weight:bold"><span class="l">51</span></div>
<div class="btn" style="left:1105px;top:775px;width:203px;height:56px"></div>
<div class="a" style="left:1105px;width:203px;text-align:center;top:794px;color:#3a8ee6;font-weight:bold;font-size:16px">开始抢票</div>
<div class="box" style="left:0;top:859px;width:1338px;height:27px;background:#f0f0f0"></div>
<svg class="box" style="left:4px;top:865px" width="16" height="16" viewBox="0 0 16 16" fill="none" stroke="#222" stroke-width="1.3"><circle cx="8" cy="8" r="6.6"/><path d="M8 7 V11.6 M8 4.2 V5.6" stroke-width="1.5"/></svg>
<div class="a " style="left:26px;top:862.5px;color:#31566a">当前账号<span class="l">:[</span>未登录]</div>
<div class="vl" style="left:151px;top:863px;height:19px;background:#b8b8b8"></div>
<svg class="box" style="left:158.5px;top:865.5px" width="15" height="15" viewBox="0 0 15 15" fill="none" stroke="#222" stroke-width="1.5"><rect x="1.2" y="1.2" width="12.6" height="12.6" rx="1"/><path d="M10.5 4.5 L5 10 M5 6 V10 H9"/></svg>
<div class="a " style="left:179.5px;top:862.5px;color:#31566a">推送</div>
<div class="vl" style="left:216px;top:863px;height:19px;background:#b8b8b8"></div>
<svg class="box" style="left:222.5px;top:865px" width="16" height="16" viewBox="0 0 16 16" fill="none" stroke="#222" stroke-width="1.5"><path d="M2 11.5 L9.5 2.5 L13.5 6 L6 14.5 L2 14.5 Z M8 4.5 L11.8 7.8"/></svg>
<div class="a " style="left:244.5px;top:862.5px;color:#31566a">进度:</div>
<div class="box" style="left:286px;top:862.5px;width:125px;height:20px;background:#e6e6e6;border:1px solid #bcbcbc"></div>
<div class="a " style="left:411px;top:862.5px;color:#c8372d"><span class="l">9-18,</span>北京南-济南西<span class="l">,G159</span>车次<span class="l">,¥177.0</span>元的二等座！</div>
<svg class="box" style="left:1302px;top:865px" width="17" height="15" viewBox="0 0 17 15" fill="none" stroke="#555" stroke-width="1.3"><path d="M1 5 A10.5 10.5 0 0 1 16 5 M3.4 7.6 A7 7 0 0 1 13.6 7.6 M5.8 10 A3.8 3.8 0 0 1 11.2 10"/><circle cx="8.5" cy="12.4" r="1.3" fill="#555" stroke="none"/></svg>
<div class="box" style="left:1332px;top:872px;width:2px;height:2px;background:#a8a8a8"></div>
<div class="box" style="left:1328px;top:876px;width:2px;height:2px;background:#a8a8a8"></div>
<div class="box" style="left:1332px;top:876px;width:2px;height:2px;background:#a8a8a8"></div>
<div class="box" style="left:1324px;top:880px;width:2px;height:2px;background:#a8a8a8"></div>
<div class="box" style="left:1328px;top:880px;width:2px;height:2px;background:#a8a8a8"></div>
<div class="box" style="left:1332px;top:880px;width:2px;height:2px;background:#a8a8a8"></div>
</body></html>
